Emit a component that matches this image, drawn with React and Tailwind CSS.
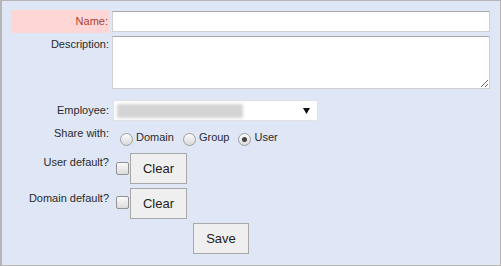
import React from "react";

function Radio({ label, checked }) {
  return (
    <div className="flex items-start mr-[9px]">
      <span className="w-[13px] h-[13px] rounded-full border border-[#a0a0a0] bg-gradient-to-b from-[#fbfbfb] to-[#dadada] flex items-center justify-center">
        {checked && <span className="w-[5px] h-[5px] rounded-full bg-[#444]" />}
      </span>
      <span className="ml-[3px] -mt-[2px] leading-[13px]">{label}</span>
    </div>
  );
}

function Checkbox() {
  return (
    <span className="block w-[13px] h-[13px] rounded-[2px] border border-[#939393] bg-gradient-to-b from-[#fafafa] to-[#dcdcdc]" />
  );
}

function Button({ children, className = "" }) {
  return (
    <button
      type="button"
      className={`h-[31px] border border-[#a8a8a8] bg-[#efefef] text-[13px] text-[#222] leading-none ${className}`}
    >
      {children}
    </button>
  );
}

export default function App() {
  return (
    <div className="w-[501px] h-[266px] border-t border-r border-b border-l-2 border-[#b5b5b5] bg-[#dfe6f5] pt-[9px] pl-[9px] font-['Liberation_Sans',Arial,sans-serif] text-[11px] leading-[13px] text-[#2b2b2b]">
      {/* Name */}
      <div className="flex h-[23px]">
        <div className="w-[98px] bg-[#ffd6d6] flex items-center justify-end pr-[1px] text-[#a8452f]">
          Name:
        </div>
        <input
          type="text"
          className="ml-[3px] mt-[1px] w-[378px] h-[21px] bg-white border border-[#d0d0d0] border-t-[#a9a9a9] outline-none"
        />
      </div>

      {/* Description */}
      <div className="flex mt-[3px]">
        <div className="w-[98px] text-right pt-[2px]">Description:</div>
        <textarea
          readOnly
          className="ml-[3px] w-[378px] h-[53px] bg-white border border-[#d0d0d0] border-t-[#a9a9a9] outline-none"
        />
      </div>

      {/* Employee */}
      <div className="flex items-center mt-[11px] h-[21px]">
        <div className="w-[98px] text-right">Employee:</div>
        <div className="ml-[4px] w-[205px] h-[21px] bg-white border border-[#e2e2e2] flex items-center justify-between pl-[3px] pr-[7px]">
          <div className="w-[126px] h-[14px] bg-[#d4d4d4] blur-[1.5px]" />
          <svg width="7" height="6" viewBox="0 0 7 6">
            <path d="M0 0 H7 L3.5 6 Z" fill="#111" />
          </svg>
        </div>
      </div>

      {/* Share with */}
      <div className="flex mt-[6px] h-[19px]">
        <div className="w-[98px] text-right">Share with:</div>
        <div className="ml-[11px] mt-[6px] flex">
          <Radio label="Domain" />
          <Radio label="Group" />
          <Radio label="User" checked />
        </div>
      </div>

      {/* User default */}
      <div className="flex mt-[7px]">
        <div className="w-[98px] text-right pt-[3px]">User default?</div>
        <div className="ml-[7px] mt-[9px]">
          <Checkbox />
        </div>
        <Button className="ml-[1px] w-[57px]">Clear</Button>
      </div>

      {/* Domain default */}
      <div className="flex mt-[4px]">
        <div className="w-[98px] text-right pt-[4px]">Domain default?</div>
        <div className="ml-[7px] mt-[8px]">
          <Checkbox />
        </div>
        <Button className="ml-[1px] w-[57px]">Clear</Button>
      </div>

      {/* Save */}
      <div className="flex mt-[4px]">
        <div className="w-[98px]" />
        <Button className="ml-[84px] w-[56px]">Save</Button>
      </div>
    </div>
  );
}
